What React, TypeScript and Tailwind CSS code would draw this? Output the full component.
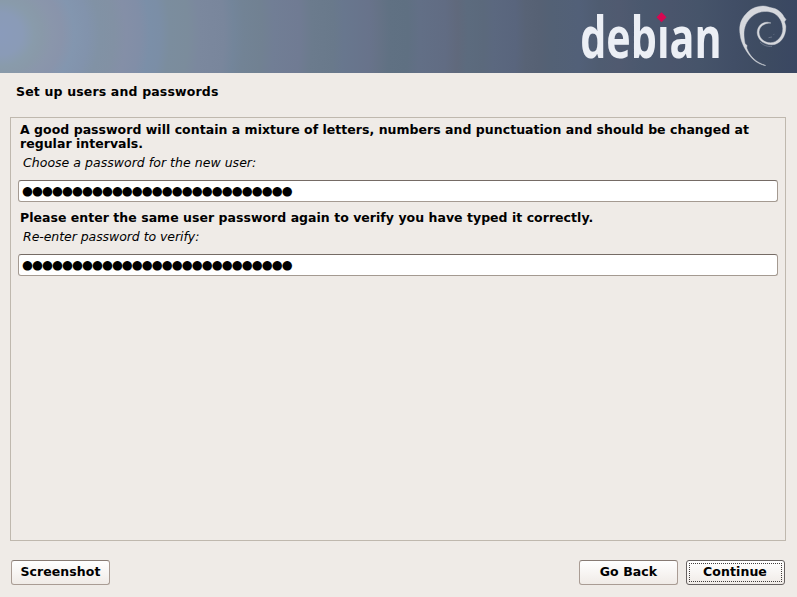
import React from "react";

const bands =
  "bg-[radial-gradient(ellipse_797px_760px_at_0px_34px,#8a9bbb_0px,#8a9bb7_22px,#899bab_34px,#8999a9_42px,#8a96ab_52px,#8994ab_62px,#8396af_74px,#8293ac_88px,#8192a5_100px,#8291a4_114px,#848fa7_126px,#818ea7_140px,#7b8fa8_150px,#7b8ea6_160px,#7b8d9e_170px,#7b8c9c_188px,#7b889e_200px,#79869c_224px,#73859a_234px,#728395_244px,#718192_262px,#717e95_274px,#707b93_300px,#6b7b8d_312px,#69798b_334px,#68778e_344px,#68738b_370px,#657286_380px,#607183_390px,#5f7082_408px,#626f86_420px,#616c83_446px,#60697c_458px,#5c6b7e_468px,#5b697c_484px,#5b687f_494px,#59657d_516px,#586376_526px,#566174_540px,#536175_552px,#526078_580px,#4f5c71_600px,#505a70_620px,#4a586e_645px,#4a556c_670px,#46546a_700px,#414e66_735px,#3d4b61_765px,#3a4762_797px)]";

function PasswordField({
  heading,
  label,
  labelSpacing,
}: {
  heading: string;
  label: string;
  labelSpacing: string;
}) {
  return (
    <section className="flex flex-col">
      <h2 className="ml-0.5 w-[740px] text-[12.5px] leading-[14px] font-bold tracking-[.029px]">{heading}</h2>
      <label className={`mt-[5px] ml-[5px] h-[14px] text-[12.5px] leading-[14px] italic ${labelSpacing}`}>{label}</label>
      <div className="mt-[10px] flex h-[22px] items-center rounded-[3px] border border-[#a49a91] border-t-[#756b65] bg-white pl-[3px] text-[12.5px] leading-5 tracking-[-.92px] whitespace-nowrap">
        {"●".repeat(27)}
      </div>
    </section>
  );
}

function Button({ children, focused = false }: { children: string; focused?: boolean }) {
  return (
    <button
      className={`flex h-[25px] w-[99px] rounded-[3px] border bg-linear-to-b from-white to-[#f0ebe7] p-0.5 text-[12.5px] font-bold tracking-[.08px] ${
        focused ? "border-[#666160]" : "border-[#a99c94] border-t-[#877b74]"
      }`}
    >
      <span
        className={`flex h-full w-full items-center justify-center border border-dotted pb-px leading-[14px] ${
          focused ? "border-[#403c3a] pr-px" : "border-transparent"
        }`}
      >
        {children}
      </span>
    </button>
  );
}

function DebianLogo() {
  return (
    <svg className="h-[73px] w-[227px] overflow-visible" viewBox="570 0 227 73" aria-label="debian">
      <defs>
        {/* The letter's own tittle is hidden so the red diamond can take its place */}
        <clipPath id="tittle">
          <path d="M570 0H655.5V24H667.5V0H797V73H570Z" />
        </clipPath>
      </defs>
      <g clipPath="url(#tittle)">
        <text
          transform="translate(580.2 58) scale(.7 1)"
          fontFamily="'Open Sans', sans-serif"
          fontWeight="700"
          fontSize="57"
          textLength="202"
          lengthAdjust="spacingAndGlyphs"
          fill="#eceff5"
        >
          debian
        </text>
      </g>
      <path d="M661.5 12.3l5 4.9-5 5-5-5z" fill="#d70751" />
      <path
        d="M765.7 65.5C759 64.5 754 61 750 56C746 51 741 43 740.2 35C738.5 26 741 19 746 14C750 9 756 6.3 763 6C767 6 768.5 7.3 771.5 7.8C777 8.5 782 12.5 784 17L786 19.5L784.5 21.8L785.8 26C786.3 36 780.5 44.5 772 44.8C763.5 45 757.3 39 757.2 32.5C757.4 26 762 22.2 767.5 22.2L771 23C764 23 759.5 26.5 759 32C759 38 764 42.8 770.5 42.8C777.5 42.5 783 36 782.8 28.5C782.5 21.5 779 16 774 13.2C768 10.4 760 11 754 14.8C748 19 744.5 25 744 32C743.8 36 744.3 40 745 43.5L747 45.5L746.7 48C749.5 56 756 62.5 765.7 65.5Z"
        fill="#d6d8dd"
        stroke="#d6d8dd"
        strokeWidth=".4"
      />
      <path d="M768.5 37.7l3.5-.7M773.5 34.5l.8-.2M760 42c3 3.5 8 4.8 12 4.5" fill="none" stroke="#858e9f" strokeWidth=".6" />
    </svg>
  );
}

export default function App() {
  return (
    <main className="flex h-[597px] w-[797px] flex-col overflow-hidden bg-[#efebe7] font-['DejaVu_Sans',sans-serif] text-black">
      <header className={`flex h-[73px] shrink-0 justify-end ${bands}`}>
        <DebianLogo />
      </header>
      <h1 className="mt-3 ml-4 h-[14px] text-[12.5px] leading-[14px] font-bold tracking-[.16px]">Set up users and passwords</h1>
      <div className="mt-[18px] mr-[11px] ml-[10px] flex h-[424px] shrink-0 flex-col gap-[9px] border border-[#bfb8ae] px-[7px] pt-[5px]">
        <PasswordField
          heading="A good password will contain a mixture of letters, numbers and punctuation and should be changed at regular intervals."
          label="Choose a password for the new user:"
          labelSpacing="tracking-[.03px]"
        />
        <PasswordField
          heading="Please enter the same user password again to verify you have typed it correctly."
          label="Re-enter password to verify:"
          labelSpacing="tracking-[-.06px]"
        />
      </div>
      <footer className="mt-[19px] mr-3 ml-[11px] flex justify-between">
        <Button>Screenshot</Button>
        <div className="flex gap-2">
          <Button>Go Back</Button>
          <Button focused>Continue</Button>
        </div>
      </footer>
    </main>
  );
}
